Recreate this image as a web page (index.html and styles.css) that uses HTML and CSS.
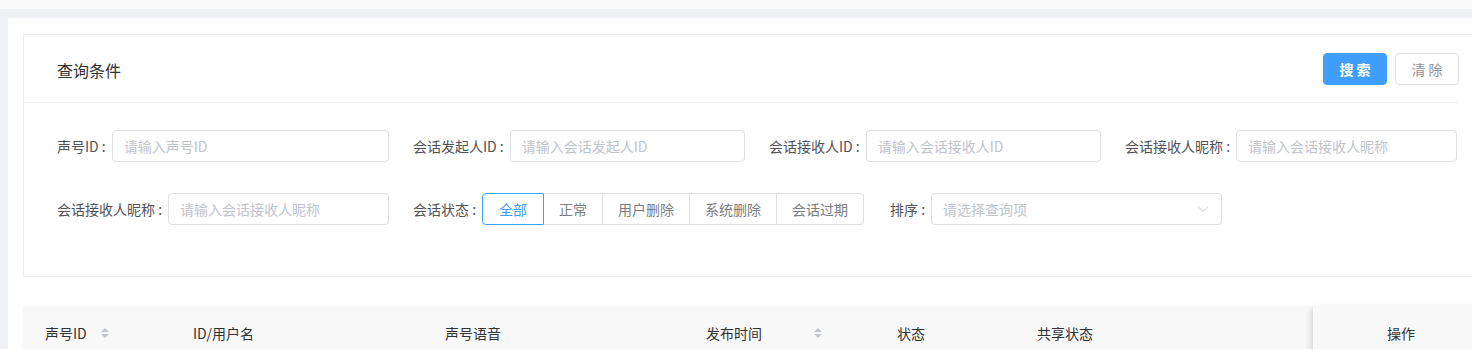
FILE: index.html
```html
<!DOCTYPE html>
<html lang="zh-CN">
<head>
    <meta charset="UTF-8">
    <title>会话查询</title>
    <link rel="stylesheet" href="styles.css">
</head>
<body>
    <div class="topbar"></div>
    <div class="main">
        <div class="page">
            <div class="query-card">
                <div class="query-head">
                    <span class="query-title">查询条件</span>
                    <div class="query-actions">
                        <button class="btn btn-primary" type="button">搜 索</button>
                        <button class="btn" type="button">清 除</button>
                    </div>
                </div>
                <form class="query-body" autocomplete="off">
                    <div class="form-row">
                        <div class="form-item">
                            <label>声号ID :</label>
                            <input type="text" placeholder="请输入声号ID">
                        </div>
                        <div class="form-item">
                            <label>会话发起人ID :</label>
                            <input type="text" placeholder="请输入会话发起人ID">
                        </div>
                        <div class="form-item">
                            <label>会话接收人ID :</label>
                            <input type="text" placeholder="请输入会话接收人ID">
                        </div>
                        <div class="form-item">
                            <label>会话接收人昵称 :</label>
                            <input type="text" placeholder="请输入会话接收人昵称">
                        </div>
                    </div>
                    <div class="form-row">
                        <div class="form-item">
                            <label>会话接收人昵称 :</label>
                            <input type="text" placeholder="请输入会话接收人昵称">
                        </div>
                        <div class="form-item form-item-auto">
                            <label>会话状态 :</label>
                            <div class="radio-group">
                                <span class="radio-btn active">全部</span>
                                <span class="radio-btn">正常</span>
                                <span class="radio-btn">用户删除</span>
                                <span class="radio-btn">系统删除</span>
                                <span class="radio-btn">会话过期</span>
                            </div>
                        </div>
                        <div class="form-item form-item-sort">
                            <label>排序 :</label>
                            <div class="select">
                                <span class="select-text">请选择查询项</span>
                                <svg class="select-arrow" width="12" height="8" viewBox="0 0 12 8"><path d="M1 1.5 L6 6.5 L11 1.5" fill="none" stroke="#c0c4cc" stroke-width="1"/></svg>
                            </div>
                        </div>
                    </div>
                </form>
            </div>

            <div class="table">
                <div class="table-head">
                    <div class="th th-id">声号ID <span class="sort"><i class="up"></i><i class="down"></i></span></div>
                    <div class="th th-user">ID/用户名</div>
                    <div class="th th-voice">声号语音</div>
                    <div class="th th-time">发布时间 <span class="sort"><i class="up"></i><i class="down"></i></span></div>
                    <div class="th th-status">状态</div>
                    <div class="th th-share">共享状态</div>
                    <div class="th th-fill"></div>
                    <div class="th th-op">操作</div>
                </div>
            </div>
        </div>
    </div>
</body>
</html>
```

FILE: styles.css
```css
body {
    margin: 0;
    background: #f0f1f5;
    font-family: "Noto Sans CJK SC", "Noto Sans", sans-serif;
    font-size: 14px;
    color: #303133;
    overflow: hidden;
}
.topbar {
    height: 9px;
    background: #fbfbfc;
}
.main {
    padding: 9px 0 0 8px;
}
.page {
    background: #fff;
    padding: 16px 0 0 15px;
    width: 1500px;
    min-height: 400px;
}
.query-card {
    border: 1px solid #ebeef5;
    border-right: none;
    width: 1485px;
}
.query-head {
    height: 67px;
    border-bottom: 1px solid #ebeef5;
    display: flex;
    align-items: center;
    justify-content: space-between;
    padding: 0 0 0 33px;
    width: 1402px;
}
.query-title {
    font-size: 16px;
    color: #303133;
    padding-top: 2px;
}
.query-actions {
    display: flex;
    gap: 8px;
}
.btn {
    width: 64px;
    height: 32px;
    border: 1px solid #dcdfe6;
    border-radius: 4px;
    background: #fff;
    color: #909399;
    font-family: inherit;
    font-size: 14px;
    padding: 0;
    cursor: pointer;
}
.btn-primary {
    background: #409eff;
    border-color: #409eff;
    color: #fff;
    font-weight: 700;
}
.query-body {
    padding: 27px 0 51px 33px;
    margin: 0;
}
.form-row {
    display: flex;
    gap: 24px;
    margin-bottom: 31px;
}
.form-row:last-child {
    margin-bottom: 0;
}
.form-item {
    width: 332px;
    display: flex;
    align-items: center;
    height: 32px;
}
.form-item-auto {
    width: auto;
}
.form-item-sort {
    margin-left: 2px;
}
.form-item label {
    color: #505257;
    white-space: nowrap;
    padding-right: 6px;
}
.form-item input {
    flex: 1;
    min-width: 0;
    height: 32px;
    box-sizing: border-box;
    border: 1px solid #dcdfe6;
    border-radius: 4px;
    padding: 0 11px;
    font-family: inherit;
    font-size: 14px;
    color: #606266;
    outline: none;
}
.form-item input::placeholder {
    color: #c0c4cc;
}
.radio-group {
    display: flex;
}
.radio-btn {
    height: 32px;
    box-sizing: border-box;
    line-height: 30px;
    padding: 0 15px;
    border: 1px solid #dcdfe6;
    border-left: none;
    color: #7a7d82;
}
.radio-btn:first-child {
    border-left: 1px solid #dcdfe6;
    border-radius: 4px 0 0 4px;
}
.radio-btn:last-child {
    border-radius: 0 4px 4px 0;
}
.radio-btn.active {
    border-color: #409eff;
    color: #409eff;
    padding: 0 16px;
}
.select {
    flex: 1;
    height: 32px;
    box-sizing: border-box;
    border: 1px solid #dcdfe6;
    border-radius: 4px;
    display: flex;
    align-items: center;
    justify-content: space-between;
    padding: 0 12px 0 11px;
}
.select-text {
    color: #c0c4cc;
}
.table {
    margin-top: 29px;
    width: 1466px;
}
.table-head {
    display: flex;
    height: 54px;
    background: #f8f8f9;
    align-items: stretch;
}
.th {
    display: flex;
    align-items: center;
    padding: 0 0 0 22px;
    color: #303133;
    white-space: nowrap;
    box-sizing: border-box;
}
.th-id { width: 148px; }
.th-user { width: 252px; }
.th-voice { width: 261px; }
.th-time { width: 191px; }
.th-status { width: 140px; }
.th-share { width: 140px; }
.th-fill { flex: 1; }
.th-op {
    width: 176px;
    justify-content: center;
    padding: 0;
    background: #f8f8f9;
    box-shadow: -4px 0 6px -2px rgba(0, 0, 0, 0.15);
}
.sort {
    display: inline-flex;
    flex-direction: column;
    gap: 2px;
    margin-left: 14px;
}
.th-time .sort {
    margin-left: 52px;
}
.sort i {
    width: 0;
    height: 0;
    border-left: 4px solid transparent;
    border-right: 4px solid transparent;
}
.sort .up {
    border-bottom: 4px solid #c0c4cc;
}
.sort .down {
    border-top: 4px solid #c0c4cc;
}
```
